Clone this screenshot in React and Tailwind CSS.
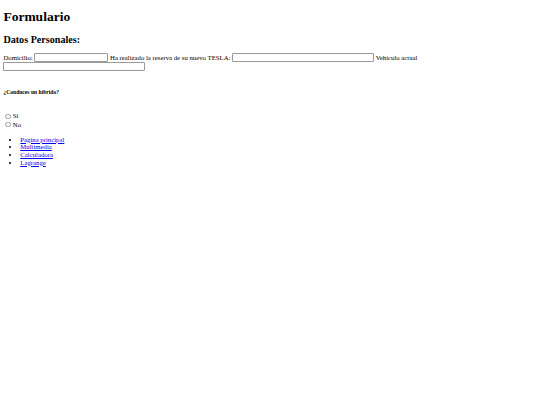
import React from 'react';

const LINKS = ['Pagina principal', 'Multimedia', 'Calculadora', 'Lagrange'];

function TextInput({ w }) {
  return <input type="text" className={`inline-block h-[9px] ${w} border border-[#9a9a9a] rounded-[1px] bg-white align-top outline-none`} />;
}

function Radio({ label }) {
  return (
    <div className="flex items-center h-[8.4px]">
      <span className="inline-block w-[5.5px] h-[5.5px] ml-[2.1px] mr-[1.8px] rounded-full border-[0.6px] border-[#9a9a9a] bg-white" />
      <span>{label}</span>
    </div>
  );
}

export default function App() {
  return (
    <div className="min-h-[405px] bg-white text-black px-[3.4px] font-['Liberation_Serif',serif] text-[6.75px] leading-[1.15]">
      <h1 className="text-[13.5px] font-bold leading-[1.15] pt-[9px] mb-[9px]">Formulario</h1>
      <form>
        <h2 className="text-[10.125px] font-bold leading-[1.15] mb-[8px]">Datos Personales:</h2>
        <div className="leading-[9px]">
          Domicilio: <TextInput w="w-[74px]" /> Ha realizado la reserva de su nuevo TESLA: <TextInput w="w-[142px]" /> Vehiculo actual <TextInput w="w-[142px]" />
        </div>
        <h5 className="text-[5.6px] font-bold leading-[1.15] mt-[17.5px] mb-[9.4px]">¿Conduces un híbrido?</h5>
        <div className="mt-[17px]">
          <Radio label="Sí" />
          <Radio label="No" />
        </div>
        <ul className="list-disc pl-[16.9px] my-[6.75px]">
          {LINKS.map((l) => (
            <li key={l}><a href="#" className="text-[#0000ee] underline decoration-[0.5px] underline-offset-[1px]">{l}</a></li>
          ))}
        </ul>
      </form>
    </div>
  );
}
